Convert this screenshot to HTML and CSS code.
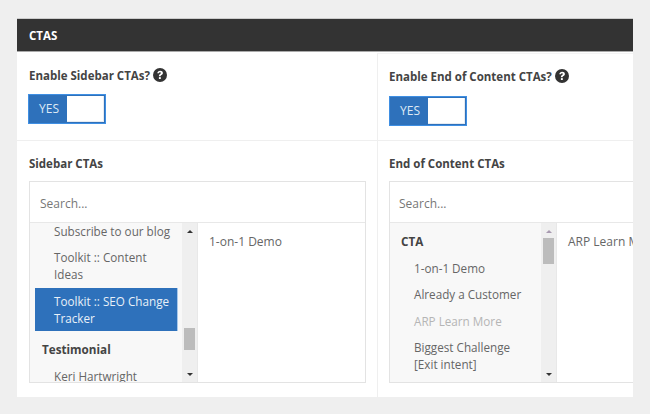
FILE: index.html
```html
<!DOCTYPE html>
<html lang="en">
<head>
<meta charset="utf-8">
<title>CTAs</title>
<link rel="stylesheet" href="styles.css">
</head>
<body>
<section class="panel">
  <h2 class="panel-head">CTAS</h2>
  <div class="grid">
    <div class="cell cell-toggle">
      <div class="label">Enable Sidebar CTAs?
        <svg class="help" viewBox="0 0 14 14" aria-hidden="true"><circle cx="7" cy="7" r="7" fill="#333"/><path d="M4.300 5.200C4.400 3.600 5.600 2.700 7.100 2.700c1.600 0 2.800.9 2.800 2.300 0 1.100-.7 1.600-1.400 2-.6.4-.8.6-.8 1.300H5.900c0-1.200.3-1.800 1.100-2.300.6-.3.9-.6.9-1 0-.5-.4-.8-.9-.8-.6 0-1 .4-1.100 1z" fill="#fff"/><rect x="5.900" y="9.100" width="1.900" height="1.900" fill="#fff"/></svg>
      </div>
      <div class="toggle toggle-left"><span class="toggle-on">YES</span><span class="toggle-knob"></span></div>
    </div>
    <div class="cell cell-toggle cell-right cell-offset">
      <div class="label">Enable End of Content CTAs?
        <svg class="help" viewBox="0 0 14 14" aria-hidden="true"><circle cx="7" cy="7" r="7" fill="#333"/><path d="M4.300 5.200C4.400 3.600 5.600 2.700 7.100 2.700c1.600 0 2.800.9 2.800 2.300 0 1.100-.7 1.600-1.400 2-.6.4-.8.6-.8 1.300H5.900c0-1.200.3-1.800 1.100-2.300.6-.3.9-.6.9-1 0-.5-.4-.8-.9-.8-.6 0-1 .4-1.100 1z" fill="#fff"/><rect x="5.900" y="9.100" width="1.900" height="1.900" fill="#fff"/></svg>
      </div>
      <div class="toggle"><span class="toggle-on">YES</span><span class="toggle-knob"></span></div>
    </div>
    <div class="cell cell-list">
      <div class="label label-list">Sidebar CTAs</div>
      <div class="picker">
        <div class="search">Search...</div>
        <div class="panes">
          <div class="options">
            <ul class="opt-list opt-list-a">
              <li class="opt">Subscribe to our blog</li>
              <li class="opt">Toolkit :: Content Ideas</li>
              <li class="opt opt-active">Toolkit :: SEO Change Tracker</li>
              <li class="opt-group">Testimonial</li>
              <li class="opt">Keri Hartwright</li>
            </ul>
            <div class="scrollbar">
              <span class="arrow arrow-up"></span>
              <span class="thumb thumb-low"></span>
              <span class="arrow arrow-down"></span>
            </div>
          </div>
          <div class="selected">1-on-1 Demo</div>
        </div>
      </div>
    </div>
    <div class="cell cell-list cell-right">
      <div class="label label-list">End of Content CTAs</div>
      <div class="picker">
        <div class="search">Search...</div>
        <div class="panes">
          <div class="options">
            <ul class="opt-list opt-list-b">
              <li class="opt-group">CTA</li>
              <li class="opt">1-on-1 Demo</li>
              <li class="opt">Already a Customer</li>
              <li class="opt opt-disabled">ARP Learn More</li>
              <li class="opt">Biggest Challenge [Exit intent]</li>
            </ul>
            <div class="scrollbar">
              <span class="arrow arrow-up arrow-muted"></span>
              <span class="thumb thumb-high"></span>
              <span class="arrow arrow-down"></span>
            </div>
          </div>
          <div class="selected">ARP Learn More</div>
        </div>
      </div>
    </div>
  </div>
</section>
</body>
</html>
```
FILE: styles.css
```css
* { box-sizing: border-box; }
html, body { margin: 0; height: 414px; overflow: hidden; }
body {
  background: #efefef;
  font-family: "Open Sans", sans-serif;
  font-size: 12px;
  color: #444;
  padding: 18px 17px 0;
}
.panel { width: 616px; height: 379px; background: #fff; overflow: hidden; }
.panel-head {
  margin: 0;
  height: 34px;
  padding: 0 12px;
  background: #333;
  border-top: 1px solid #ccc;
  border-bottom: 1px solid #aaa;
  color: #fff;
  font-size: 11.5px;
  font-weight: 700;
  line-height: 33px;
}
.grid { display: grid; grid-template-columns: 360px 256px; grid-template-rows: 89px 256px; }
.cell { padding: 0 12px; }
.cell-right { border-left: 1px solid #efefef; padding-left: 11px; padding-right: 0; overflow: hidden; }
.cell-toggle { padding-top: 15px; border-bottom: 1px solid #efefef; }
.cell-offset { padding-top: 14px; border-top: 1px solid #f4f4f4; margin-top: 1px; }
.cell-offset .toggle { margin-top: 12px; }
.label { display: flex; align-items: center; gap: 3px; height: 16px; font-size: 11.5px; font-weight: 700; color: #444; white-space: nowrap; }
.help { width: 14px; height: 14px; }
.toggle { display: flex; width: 78px; height: 30px; margin-top: 11px; padding: 1px; border: 1px solid #3f8fe3; background: #2e71bb; }
.toggle-left { margin-left: -1px; }
.toggle-on { width: 37px; padding-left: 9px; color: #dfe9f5; font-size: 12px; line-height: 26px; }
.toggle-knob { width: 37px; background: #fff; border: 1px solid #e6ebf2; border-width: 0 1px 1px 0; }
.cell-list { padding-top: 14px; }
.label-list { margin-bottom: 10px; }
.picker { width: 337px; height: 202px; border: 1px solid #e3e3e3; flex: none; }
.search { height: 41px; padding-left: 10px; border-bottom: 1px solid #e8e8e8; color: #777; font-size: 12px; line-height: 43px; }
.cell-right .search { padding-left: 9px; }
.panes { display: flex; height: 159px; }
.options { display: flex; width: 168px; background: #f8f8f8; border-right: 1px solid #e8e8e8; flex: none; overflow: hidden; }
.cell-right .options { width: 167px; }
.opt-list { list-style: none; margin: 0; flex: 1; min-width: 0; font-size: 11.7px; line-height: 17px; }
.opt-list-a { padding: 0 4px 0 5px; margin-top: -5.5px; }
.opt-list-b { padding: 0; }
.opt { padding: 5px 4px 4.5px 19px; color: #666; }
.opt-list-b .opt { padding-left: 24px; padding-right: 14px; }
.opt-group { padding: 10px 12px 4.5px 7px; color: #444; font-weight: 700; }
.opt-list-b .opt-group { padding-left: 11px; }
.opt-active { background: #2e71bb; color: #e8f0f8; border-right: 1px solid #a8c8ea; }
.opt-disabled { color: #b5b5b5; }
.scrollbar { position: relative; width: 15px; background: #efefef; flex: none; }
.arrow { position: absolute; left: 5px; width: 0; height: 0; border-left: 3px solid transparent; border-right: 3px solid transparent; }
.arrow-up { top: 7px; border-bottom: 3px solid #333; }
.arrow-muted { border-bottom-color: #a89ab0; }
.arrow-down { bottom: 6px; border-top: 3px solid #333; }
.thumb { position: absolute; left: 2px; width: 11px; background: #bcbcbc; }
.thumb-low { top: 105px; height: 22px; }
.thumb-high { top: 15px; height: 26px; }
.selected { padding: 10px 11px; color: #666; white-space: nowrap; line-height: 17px; }
```
